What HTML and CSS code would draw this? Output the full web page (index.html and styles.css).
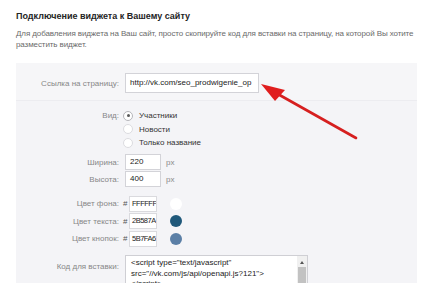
FILE: index.html
```html
<!DOCTYPE html>
<html lang="ru">
<head>
<meta charset="utf-8">
<link rel="stylesheet" href="styles.css">
</head>
<body>
<div class="page">
  <h1 class="title">Подключение виджета к Вашему сайту</h1>
  <p class="desc">Для добавления виджета на Ваш сайт, просто скопируйте код для вставки на страницу, на которой Вы хотите<br>разместить виджет.</p>
  <div class="box">
    <div class="link-section">
      <div class="row link-row">
        <span class="label">Ссылка на страницу:</span>
        <div class="field link-field">http://vk.com/seo_prodwigenie_op</div>
      </div>
    </div>
    <div class="form">
      <div class="row radio-row">
        <span class="label">Вид:</span>
        <span class="radio checked"></span><span class="opt">Участники</span>
      </div>
      <div class="row radio-row">
        <span class="label"></span>
        <span class="radio"></span><span class="opt">Новости</span>
      </div>
      <div class="row radio-row">
        <span class="label"></span>
        <span class="radio"></span><span class="opt">Только название</span>
      </div>
      <div class="row size-row first-size">
        <span class="label">Ширина:</span>
        <div class="field num">220</div><span class="unit">px</span>
      </div>
      <div class="row size-row">
        <span class="label">Высота:</span>
        <div class="field num">400</div><span class="unit">px</span>
      </div>
      <div class="row color-row first-color">
        <span class="label">Цвет фона:</span>
        <span class="hash">#</span><div class="field hex">FFFFFF</div><span class="swatch sw-white"></span>
      </div>
      <div class="row color-row">
        <span class="label">Цвет текста:</span>
        <span class="hash">#</span><div class="field hex">2B587A</div><span class="swatch sw-text"></span>
      </div>
      <div class="row color-row">
        <span class="label">Цвет кнопок:</span>
        <span class="hash">#</span><div class="field hex">5B7FA6</div><span class="swatch sw-btn"></span>
      </div>
      <div class="row code-row">
        <span class="label code-label">Код для вставки:</span>
        <div class="code">
          <div class="code-text">&lt;script type="text/javascript"<br>src="//vk.com/js/api/openapi.js?121"&gt;<br>&lt;/script&gt;</div>
          <div class="scrollbar">
            <span class="sb-arrow"></span>
            <span class="sb-thumb"></span>
          </div>
        </div>
      </div>
    </div>
  </div>
  <svg class="arrow" width="434" height="283" viewBox="0 0 434 283">
    <line x1="356" y1="138" x2="276" y2="93" stroke="#d61f1f" stroke-width="2.6" stroke-linecap="round"/>
    <polygon points="261,84 285,90 275,101" fill="#e01e1e"/>
  </svg>
</div>
</body>
</html>
```
FILE: styles.css
```css
* { box-sizing: border-box; }
html, body { margin: 0; padding: 0; background: #fff; }
body {
  font-family: "Liberation Sans", Arial, sans-serif;
  font-size: 8px;
  color: #333;
  width: 434px;
  height: 283px;
  overflow: hidden;
}
.page {
  position: relative;
  padding: 10px 0 0 16px;
}
.title {
  margin: 0;
  font-size: 9px;
  font-weight: bold;
  color: #242424;
  line-height: 12px;
}
.desc {
  margin: 5.5px 0 0;
  font-size: 8px;
  line-height: 11px;
  color: #6b6b6b;
  white-space: nowrap;
  letter-spacing: -0.1px;
}
.box {
  margin-top: 13.5px;
  width: 401px;
  height: 240px;
  background: #f4f4f7;
}
.link-section {
  height: 38px;
  padding-top: 10px;
  border-bottom: 1px solid #ececf0;
  background: #f6f6f8;
}
.row {
  display: flex;
  align-items: center;
}
.label {
  width: 104px;
  flex: none;
  text-align: right;
  color: #878787;
  font-size: 8px;
  padding-right: 1px;
  white-space: nowrap;
}
.link-row .label { margin-right: 5px; }
.field {
  background: #fff;
  border: 1px solid #d3d3d8;
  color: #222;
  white-space: nowrap;
  overflow: hidden;
  font-size: 8px;
}
.link-field {
  width: 134px;
  height: 20px;
  line-height: 18px;
  padding-left: 4px;
  font-size: 8px;
}
.form { padding-top: 8px; }
.radio-row { height: 13.5px; }
.radio-row .label { margin-right: 3px; }
.radio {
  width: 10px;
  height: 10px;
  border-radius: 50%;
  background: #fff;
  border: 1px solid #dcdce0;
  flex: none;
  position: relative;
}
.radio.checked { border-color: #b5b5ba; }
.radio.checked::after {
  content: "";
  position: absolute;
  left: 2.5px;
  top: 2.5px;
  width: 3px;
  height: 3px;
  border-radius: 50%;
  background: #5a5a5a;
}
.opt {
  margin-left: 6px;
  color: #333;
  font-size: 8px;
}
.size-row { height: 17px; }
.first-size { margin-top: 4px; }
.size-row .label { margin-right: 5px; }
.num {
  width: 36px;
  height: 16px;
  line-height: 14px;
  padding-left: 4px;
}
.unit {
  margin-left: 5px;
  color: #8a8a8a;
  font-size: 8px;
}
.color-row { height: 17.5px; }
.first-color { margin-top: 7.5px; }
.hash {
  width: 6px;
  margin-left: 3px;
  color: #555;
  font-size: 8px;
}
.hex {
  width: 28px;
  height: 16px;
  line-height: 14px;
  padding-left: 2px;
  border-color: #dadade;
  font-size: 7.5px;
  letter-spacing: -0.5px;
}
.swatch {
  width: 12px;
  height: 12px;
  border-radius: 50%;
  margin-left: 13px;
  flex: none;
}
.sw-white { background: #fff; }
.sw-text { background: #1f587a; }
.sw-btn { background: #5b7fa6; }
.code-row {
  align-items: flex-start;
  margin-top: 7.5px;
}
.code-label {
  margin-right: 5px;
  padding-top: 7px;
}
.code {
  width: 183px;
  height: 40px;
  background: #fff;
  border: 1px solid #cfcfd4;
  display: flex;
}
.code-text {
  flex: 1;
  padding: 2px 0 0 5px;
  font-size: 8px;
  line-height: 10.5px;
  color: #222;
  white-space: nowrap;
  overflow: hidden;
}
.scrollbar {
  width: 10px;
  background: #f0f0f0;
  display: flex;
  flex-direction: column;
  align-items: center;
}
.sb-arrow {
  margin-top: 5px;
  width: 0;
  height: 0;
  border-left: 2.5px solid transparent;
  border-right: 2.5px solid transparent;
  border-bottom: 3px solid #555;
}
.sb-thumb {
  margin-top: 3px;
  width: 8px;
  flex: 1;
  background: #c2c2c2;
}
.arrow {
  position: absolute;
  left: 0;
  top: 0;
  pointer-events: none;
}
```
